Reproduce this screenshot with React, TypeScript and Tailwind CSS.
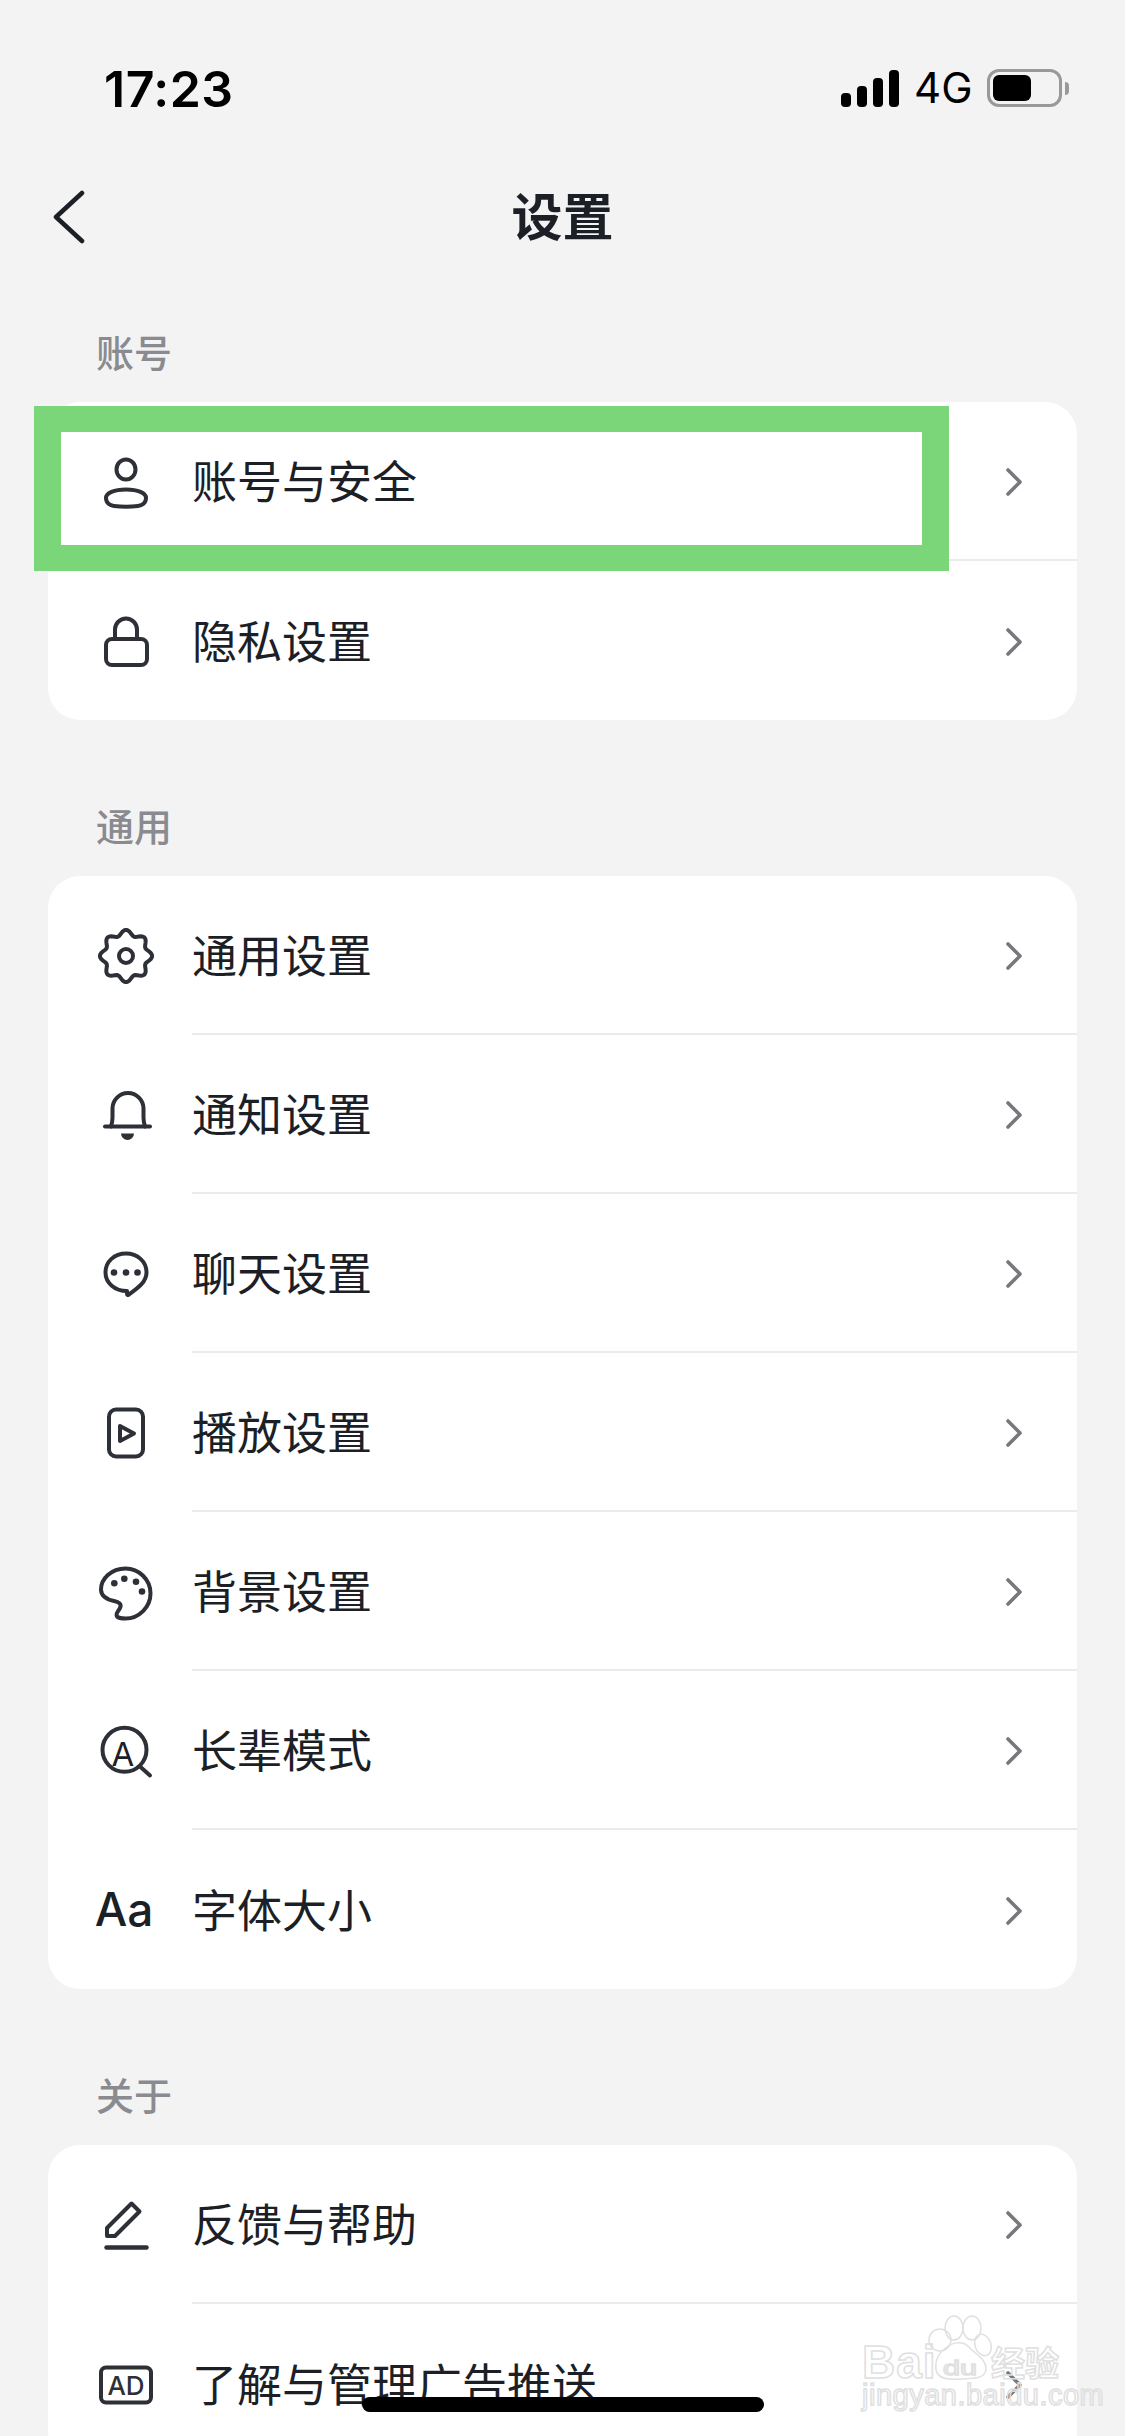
import type { ReactNode } from "react"

const gearPath =
  Array.from({ length: 96 }, (_, i) => {
    const t = (i / 96) * Math.PI * 2
    const r = 23.5 + 2.6 * Math.cos(8 * t)
    const x = 32 + r * Math.sin(t)
    const y = 32 - r * Math.cos(t)
    return `${i === 0 ? "M" : "L"}${x.toFixed(2)} ${y.toFixed(2)}`
  }).join(" ") + " Z"

function Icon({ children }: { children: ReactNode }) {
  return (
    <svg
      viewBox="0 0 64 64"
      className="w-16 h-16 shrink-0 text-[#2e3038]"
      fill="none"
      stroke="currentColor"
      strokeWidth="4"
      strokeLinecap="round"
      strokeLinejoin="round"
    >
      {children}
    </svg>
  )
}

const UserIcon = (
  <Icon>
    <ellipse cx="32" cy="19.5" rx="9.5" ry="10" />
    <path d="M12 48C12 43 20 39.5 32 39.5S52 43 52 48C52 53 48 55.5 44 56 36 57 28 57 20 56 16 55.5 12 53 12 48Z" />
  </Icon>
)

const LockIcon = (
  <Icon>
    <rect x="12" y="30" width="41" height="26" rx="6" />
    <path d="M21 30V20.5a11 11 0 0 1 22 0V30" />
  </Icon>
)

const GearIcon = (
  <Icon>
    <path d={gearPath} />
    <circle cx="32" cy="32" r="7" />
  </Icon>
)

const BellIcon = (
  <Icon>
    <path d="M11 43.5H56" />
    <path d="M17 43.5c1-3 1.5-6 1.5-9V25.5a15.5 15.5 0 0 1 31 0v9c0 3 .5 6 1.5 9" />
    <path d="M27 50.5h13a6.5 6.5 0 0 1-13 0z" fill="currentColor" stroke="none" />
  </Icon>
)

const ChatIcon = (
  <Icon>
    <path d="M33 49C21 49 11.5 41 11.5 30.5 11.5 19.5 20.5 11.5 32 11.5S52.5 19.5 52.5 30.5C52.5 40 44 46 35 52.5 34 53.5 33 53 33 52Z" />
    <g fill="currentColor" stroke="none">
      <circle cx="20" cy="30.5" r="3.3" />
      <circle cx="32" cy="30.5" r="3.3" />
      <circle cx="43.5" cy="30.5" r="3.3" />
    </g>
  </Icon>
)

const PlayIcon = (
  <Icon>
    <rect x="15" y="8.5" width="34" height="47" rx="7" />
    <path d="M26 25V40L40 32.5Z" />
  </Icon>
)

const PaletteIcon = (
  <Icon>
    <path d="M31.5 8.5C17 8.5 7 19 7 29.5 7 37 13 39.5 20 41 25 42 28 44 26 48 24 52 21 54 23 56.5 25 58.5 28 58.5 31.5 58.5 45 58.5 56.5 47 56.5 33.5 56.5 19.5 45 8.5 31.5 8.5Z" />
    <g fill="currentColor" stroke="none">
      <circle cx="20.3" cy="23.2" r="3.3" />
      <circle cx="30.3" cy="18.8" r="3.3" />
      <circle cx="42" cy="21.8" r="3.3" />
      <circle cx="48" cy="31.5" r="3.3" />
    </g>
  </Icon>
)

const ElderIcon = (
  <Icon>
    <circle cx="30.5" cy="30.8" r="22" />
    <path d="M46 47.5L56 56.5" />
    <text
      x="29"
      y="46.5"
      textAnchor="middle"
      fontSize="33"
      fill="#1c1f26"
      stroke="none"
      className="font-['Inter',sans-serif]"
    >
      A
    </text>
  </Icon>
)

const FontIcon = (
  <span className="w-16 h-16 shrink-0 flex items-center justify-center pr-1 font-['Inter',sans-serif] font-[450] text-[46px] text-[#1c1f26]">
    Aa
  </span>
)

const EditIcon = (
  <Icon>
    <path d="M37.5 10.5L45.5 18.5 21 43H13V35Z" />
    <path d="M12.5 54.5H52.5" strokeWidth="4.5" />
  </Icon>
)

const AdIcon = (
  <Icon>
    <rect x="7" y="15.5" width="50" height="35" rx="5" />
    <text
      x="32"
      y="42.5"
      textAnchor="middle"
      fontSize="26"
      fill="currentColor"
      stroke="none"
      className="font-['Inter',sans-serif] font-medium"
    >
      AD
    </text>
  </Icon>
)

type Item = { icon: ReactNode; label: string }

const sections: { title: string; first?: boolean; items: Item[] }[] = [
  {
    title: "账号",
    first: true,
    items: [
      { icon: UserIcon, label: "账号与安全" },
      { icon: LockIcon, label: "隐私设置" },
    ],
  },
  {
    title: "通用",
    items: [
      { icon: GearIcon, label: "通用设置" },
      { icon: BellIcon, label: "通知设置" },
      { icon: ChatIcon, label: "聊天设置" },
      { icon: PlayIcon, label: "播放设置" },
      { icon: PaletteIcon, label: "背景设置" },
      { icon: ElderIcon, label: "长辈模式" },
      { icon: FontIcon, label: "字体大小" },
    ],
  },
  {
    title: "关于",
    items: [
      { icon: EditIcon, label: "反馈与帮助" },
      { icon: AdIcon, label: "了解与管理广告推送" },
    ],
  },
]

function Row({ item, last }: { item: Item; last: boolean }) {
  return (
    <div className="h-[159px] flex items-center pl-[46px]">
      {item.icon}
      <div className={`ml-[34px] flex-1 self-stretch flex items-center justify-between pr-[55px] ${last ? "" : "border-b-2 border-[#ebebeb]"}`}>
        <span className="pb-0.5 text-[45px] leading-none text-[#1c1f26]">{item.label}</span>
        <svg viewBox="0 0 16 28" className="mt-0.5 w-4 h-7" fill="none" stroke="#77787c" strokeWidth="3.6" strokeLinecap="round" strokeLinejoin="round">
          <path d="M2 2L14 14 2 26" />
        </svg>
      </div>
    </div>
  )
}

function StatusBar() {
  return (
    <div className="h-[176px] flex items-center justify-between pl-[104px] pr-[56px] text-black font-['Inter',sans-serif]">
      <span className="pt-0.5 text-[50px] leading-none font-semibold tracking-[0.5px]">17:23</span>
      <div className="flex items-center">
        <div className="flex items-end gap-1.5">
          <span className="w-2.5 h-3.5 rounded-[4px] bg-black" />
          <span className="w-2.5 h-[21px] rounded-[4px] bg-black" />
          <span className="w-2.5 h-[29px] rounded-[4px] bg-black" />
          <span className="w-2.5 h-[37px] rounded-[4px] bg-black" />
        </div>
        <span className="ml-[15px] text-[42px] leading-none w-[73px]">4G</span>
        <div className="flex items-center">
          <div className="w-[75px] h-[38px] rounded-[12px] border-[3px] border-[#999999] p-[3px]">
            <div className="w-[38px] h-full rounded-[6px] bg-black" />
          </div>
          <span className="ml-[3px] w-1 h-[13px] rounded-r-[4px] bg-[#999999]" />
        </div>
      </div>
    </div>
  )
}

function Watermark() {
  const outline = "absolute text-transparent [-webkit-text-stroke:1.5px_#e0e0e0]"
  return (
    <div className="absolute left-[840px] top-[2300px] w-[260px] h-[130px] pointer-events-none">
      <svg viewBox="0 0 260 130" className="absolute inset-0 w-full h-full" fill="none" stroke="#e0e0e0" strokeWidth="1.5">
        <ellipse cx="100" cy="40" rx="11" ry="11" transform="rotate(-35 100 40)" />
        <ellipse cx="114" cy="28" rx="9" ry="12" />
        <ellipse cx="132" cy="28" rx="9" ry="12" />
        <ellipse cx="143" cy="45" rx="8" ry="11" transform="rotate(-20 143 45)" />
        <path d="M107 47C98 53 95 62 96 70 98 79 108 80 120 79 132 78 146 80 146 68 146 59 135 54 129 47 123 41 113 42 107 47Z" />
      </svg>
      <span className={`${outline} left-[22px] top-[43px] leading-[38px] font-['Liberation_Sans',sans-serif] font-bold text-[46px] tracking-[1px]`}>Bai</span>
      <span className={`${outline} left-[103px] top-[57px] leading-none origin-left scale-x-[1.45] font-['Liberation_Sans',sans-serif] text-[21px]`}>du</span>
      <span className={`${outline} left-[151px] top-[45px] leading-none font-bold text-[34px]`}>经验</span>
      <span className={`${outline} left-[22px] top-[81px] leading-[28px] font-['Liberation_Sans',sans-serif] text-[29px] tracking-[0.5px]`}>jingyan.baidu.com</span>
    </div>
  )
}

export default function App() {
  return (
    <div className="relative w-[1125px] h-[2436px] overflow-hidden bg-[#f3f3f3] font-['Noto_Sans_CJK_SC',sans-serif]">
      <StatusBar />

      <div className="h-[82px] grid grid-cols-[1fr_auto_1fr] items-center">
        <svg viewBox="0 0 32 54" className="ml-[53px] w-8 h-[54px]" fill="none" stroke="#1c1f26" strokeWidth="4.5" strokeLinecap="round" strokeLinejoin="round">
          <path d="M29 3L3 27 29 51" />
        </svg>
        <h1 className="pb-[6px] text-[51px] leading-none font-semibold text-[#1c1f26]">设置</h1>
      </div>

      {sections.map((section) => (
        <section key={section.title} className={section.first ? "mt-[72px]" : "mt-[84px]"}>
          <h2 className="h-12 mb-6 ml-[96px] text-[38px] leading-[42px] font-medium text-[#8a8b90]">{section.title}</h2>
          <div className="mx-12 w-[1029px] rounded-[32px] bg-white">
            {section.items.map((item, i) => (
              <Row key={item.label} item={item} last={i === section.items.length - 1} />
            ))}
          </div>
        </section>
      ))}

      {/* annotation box from the screenshot */}
      <div className="absolute left-[34px] top-[406px] w-[915px] h-[165px] border-x-[27px] border-y-[26px] border-[#7bd679]" />

      <Watermark />

      <div className="absolute left-[362px] top-[2397px] w-[402px] h-[15px] rounded-full bg-black" />
    </div>
  )
}
